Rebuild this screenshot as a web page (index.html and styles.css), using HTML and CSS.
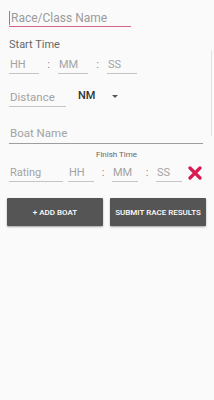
FILE: index.html
```html
<!DOCTYPE html>
<html lang="en">
<head>
    <meta charset="UTF-8">
    <meta name="viewport" content="width=device-width, initial-scale=1.0">
    <title>Race</title>
    <link rel="stylesheet" href="styles.css">
</head>
<body>
    <div class="screen">
        <div class="race-name">
            <span class="cursor"></span><span class="hint">Race/Class Name</span>
        </div>

        <div class="label">Start Time</div>
        <div class="time-row">
            <div class="field f-time">HH</div>
            <span class="colon">:</span>
            <div class="field f-time">MM</div>
            <span class="colon">:</span>
            <div class="field f-time">SS</div>
        </div>

        <div class="dist-row">
            <div class="field f-dist">Distance</div>
            <div class="unit">NM</div>
            <span class="arrow"></span>
        </div>

        <div class="field f-boat">Boat Name</div>

        <div class="finish-label">Finish Time</div>
        <div class="finish-row">
            <div class="field f-rating">Rating</div>
            <div class="field f-small">HH</div>
            <span class="colon">:</span>
            <div class="field f-small">MM</div>
            <span class="colon">:</span>
            <div class="field f-small">SS</div>
            <svg class="del" width="14" height="14" viewBox="0 0 14 14">
                <path d="M2 2 L12 12 M12 2 L2 12" stroke="#d81b50" stroke-width="3.2" stroke-linecap="round"/>
            </svg>
        </div>

        <div class="buttons">
            <div class="btn">+ ADD BOAT</div>
            <div class="btn">SUBMIT RACE RESULTS</div>
        </div>

        <div class="scroll"></div>
    </div>
</body>
</html>
```

FILE: styles.css
```css
body {
    margin: 0;
    background-color: #fafafa;
    font-family: Roboto, "Liberation Sans", sans-serif;
}

.screen {
    position: relative;
    height: 400px;
    padding: 0 8px 0 9px;
}

.race-name {
    display: flex;
    align-items: center;
    width: 122px;
    height: 15px;
    margin-top: 10px;
    padding-bottom: 1px;
    border-bottom: 1.5px solid #d6628a;
}

.cursor {
    width: 1px;
    height: 14px;
    background-color: #d6628a;
    margin-right: 1px;
}

.hint {
    font-size: 12px;
    color: #9a9a9a;
}

.label {
    margin-top: 11px;
    font-size: 11px;
    color: #666;
}

.field {
    font-size: 11px;
    color: #a3a3a3;
    border-bottom: 1px solid #c4c4c4;
    padding: 0 0 2px 1px;
    box-sizing: border-box;
}

.time-row {
    display: flex;
    align-items: flex-end;
    margin-top: 7px;
}

.f-time {
    width: 30px;
}

.time-row .colon {
    width: 19px;
    text-align: center;
    font-size: 11px;
    color: #888;
    padding-bottom: 3px;
}

.dist-row {
    display: flex;
    align-items: flex-end;
    margin-top: 15px;
}

.f-dist {
    width: 57px;
    font-size: 11.5px;
}

.unit {
    margin-left: 12px;
    font-size: 11px;
    font-weight: 500;
    color: #333;
    padding-bottom: 5px;
}

.arrow {
    margin: 0 0 9px 17px;
    width: 0;
    height: 0;
    border-left: 3px solid transparent;
    border-right: 3px solid transparent;
    border-top: 3px solid #555;
}

.f-boat {
    width: 194px;
    margin-top: 19px;
    font-size: 11.5px;
    padding-bottom: 3px;
    border-bottom-color: #9e9e9e;
}

.finish-label {
    margin-top: 6px;
    padding-left: 87px;
    font-size: 8px;
    color: #666;
}

.finish-row {
    display: flex;
    align-items: flex-end;
    margin-top: 7px;
}

.f-rating {
    width: 54px;
    margin-right: 5px;
}

.f-small {
    width: 26px;
}

.finish-row .colon {
    width: 18px;
    text-align: center;
    font-size: 11px;
    color: #888;
    padding-bottom: 3px;
}

.del {
    margin: 0 0 2px 6px;
}

.buttons {
    display: flex;
    gap: 7px;
    margin-top: 16px;
}

.btn {
    width: 96px;
    height: 28px;
    display: flex;
    align-items: center;
    justify-content: center;
    background-color: #555;
    color: #fff;
    font-size: 8px;
    font-weight: 500;
    box-shadow: 0 1px 2px rgba(0, 0, 0, 0.35);
    border-radius: 1px;
}

.buttons .btn:first-child {
    margin-left: -2px;
}

.scroll {
    position: absolute;
    right: 2px;
    top: 40px;
    width: 1px;
    height: 86px;
    background-color: #e3e3e3;
}
```
